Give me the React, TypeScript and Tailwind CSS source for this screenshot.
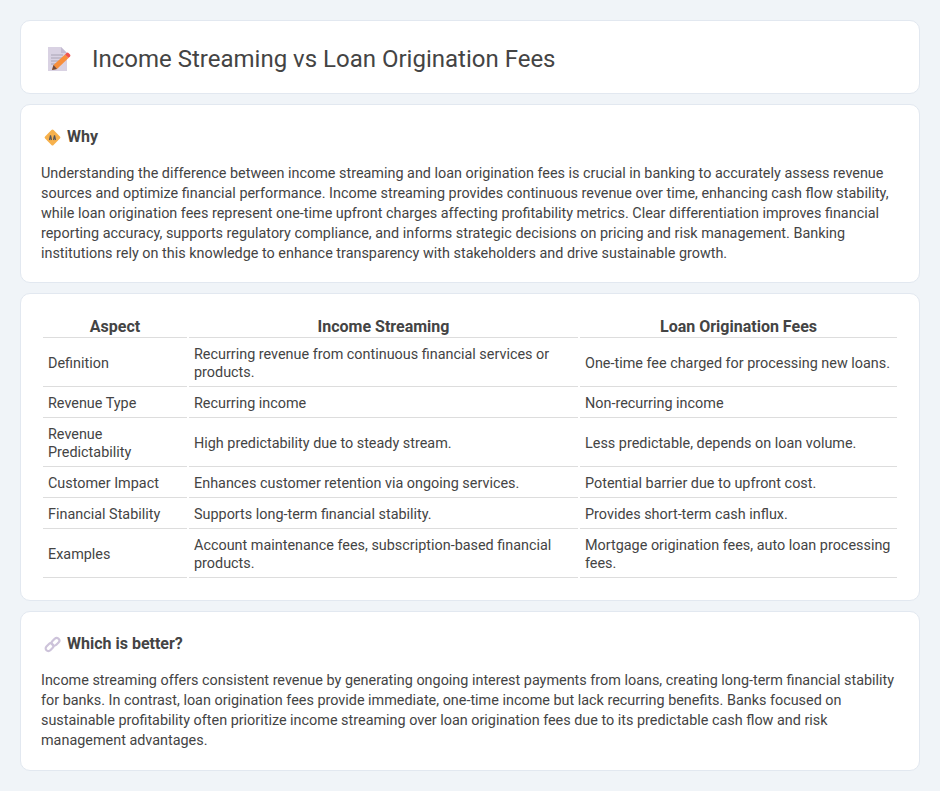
import React from "react";

const rows: [string, string, string][] = [
  ["Definition", "Recurring revenue from continuous financial services or products.", "One-time fee charged for processing new loans."],
  ["Revenue Type", "Recurring income", "Non-recurring income"],
  ["Revenue Predictability", "High predictability due to steady stream.", "Less predictable, depends on loan volume."],
  ["Customer Impact", "Enhances customer retention via ongoing services.", "Potential barrier due to upfront cost."],
  ["Financial Stability", "Supports long-term financial stability.", "Provides short-term cash influx."],
  ["Examples", "Account maintenance fees, subscription-based financial products.", "Mortgage origination fees, auto loan processing fees."],
];

function DocIcon() {
  return (
    <svg width="24" height="24" viewBox="0 0 24 24" className="shrink-0">
      <path d="M1 0h13l6 6v18H1z" fill="#d9d2e3" />
      <path d="M14 0l6 6h-6z" fill="#c4bbd2" />
      <path d="M4 8h12M4 11h12M4 14h9M4 17h6" stroke="#a9a3b5" strokeWidth="1.1" />
      <path d="M5 23l1.5-5L18 7.5l3.5 3.5L10 22z" fill="#f78f3c" />
      <path d="M18 7.5l1.5-1.5a1.5 1.5 0 0 1 2 0l1.5 1.5a1.5 1.5 0 0 1 0 2L21.5 11z" fill="#ef5350" />
      <path d="M5 23l1.5-5 3.5 4z" fill="#6d4c41" />
    </svg>
  );
}

function SignIcon() {
  return (
    <svg width="17" height="17" viewBox="0 0 17 17" className="shrink-0">
      <rect x="2.5" y="2.5" width="12" height="12" rx="1.5" transform="rotate(45 8.5 8.5)" fill="#f7b14c" />
      <path d="M5.5 11l1-4.5M7.5 11l-1-4.5M9.5 11l1-4.5M11.5 11l-1-4.5M5.7 9h2M9.3 9h2" stroke="#56555a" strokeWidth="1.2" fill="none" />
    </svg>
  );
}

function LinkIcon() {
  return (
    <svg width="17" height="17" viewBox="0 0 17 17" className="shrink-0">
      <g fill="none" stroke="#cdc3da" strokeWidth="2.2">
        <rect x="1.2" y="8.5" width="8.6" height="5.4" rx="2.7" transform="rotate(-45 5.5 11.2)" />
        <rect x="7.2" y="3.1" width="8.6" height="5.4" rx="2.7" transform="rotate(-45 11.5 5.8)" />
      </g>
    </svg>
  );
}

const card = "bg-white border border-[#e2e8f0] rounded-[10px]";

export default function App() {
  return (
    <div className="min-h-[791px] bg-[#f0f4f8] p-5 flex flex-col gap-[10px] text-[#444444] font-['Roboto',sans-serif] text-[14.4px] leading-[19.9px]">
      <header className={`${card} h-[74px] flex items-center pl-[26px] gap-[21px] pt-[3px]`}>
        <DocIcon />
        <h1 className="text-[24px] leading-[34px] font-normal text-[#444444]">Income Streaming vs Loan Origination Fees</h1>
      </header>

      <section className={`${card} h-[179px] pt-[21px] px-[20px]`}>
        <h2 className="flex items-center gap-[6px] pl-[3px] text-[16px] leading-[22px] font-bold">
          <SignIcon />
          Why
        </h2>
        <p className="mt-[16px]">
          Understanding the difference between income streaming and loan origination fees is crucial in banking to accurately assess revenue sources and optimize financial performance. Income streaming provides continuous revenue over time, enhancing cash flow stability, while loan origination fees represent one-time upfront charges affecting profitability metrics. Clear differentiation improves financial reporting accuracy, supports regulatory compliance, and informs strategic decisions on pricing and risk management. Banking institutions rely on this knowledge to enhance transparency with stakeholders and drive sustainable growth.
        </p>
      </section>

      <section className={`${card} h-[308px] pt-[21px] px-[20px]`}>
        <table className="w-full border-separate border-spacing-[2px] table-fixed leading-[18px]">
          <colgroup>
            <col className="w-[144px]" />
            <col className="w-[389px]" />
            <col />
          </colgroup>
          <thead>
            <tr>
              {["Aspect", "Income Streaming", "Loan Origination Fees"].map((h) => (
                <th key={h} className="font-bold text-[16px] leading-[20px] text-center border-b border-[#dddddd] px-[5px] py-0">
                  {h}
                </th>
              ))}
            </tr>
          </thead>
          <tbody>
            {rows.map((r) => (
              <tr key={r[0]}>
                {r.map((c, i) => (
                  <td key={i} className="border-b border-[#dddddd] px-[5px] pt-[6px] pb-[4px] align-middle">
                    {c}
                  </td>
                ))}
              </tr>
            ))}
          </tbody>
        </table>
      </section>

      <section className={`${card} h-[160px] pt-[21px] px-[20px]`}>
        <h2 className="flex items-center gap-[6px] pl-[3px] text-[16px] leading-[22px] font-bold">
          <LinkIcon />
          Which is better?
        </h2>
        <p className="mt-[16px]">
          Income streaming offers consistent revenue by generating ongoing interest payments from loans, creating long-term financial stability for banks. In contrast, loan origination fees provide immediate, one-time income but lack recurring benefits. Banks focused on sustainable profitability often prioritize income streaming over loan origination fees due to its predictable cash flow and risk management advantages.
        </p>
      </section>
    </div>
  );
}
